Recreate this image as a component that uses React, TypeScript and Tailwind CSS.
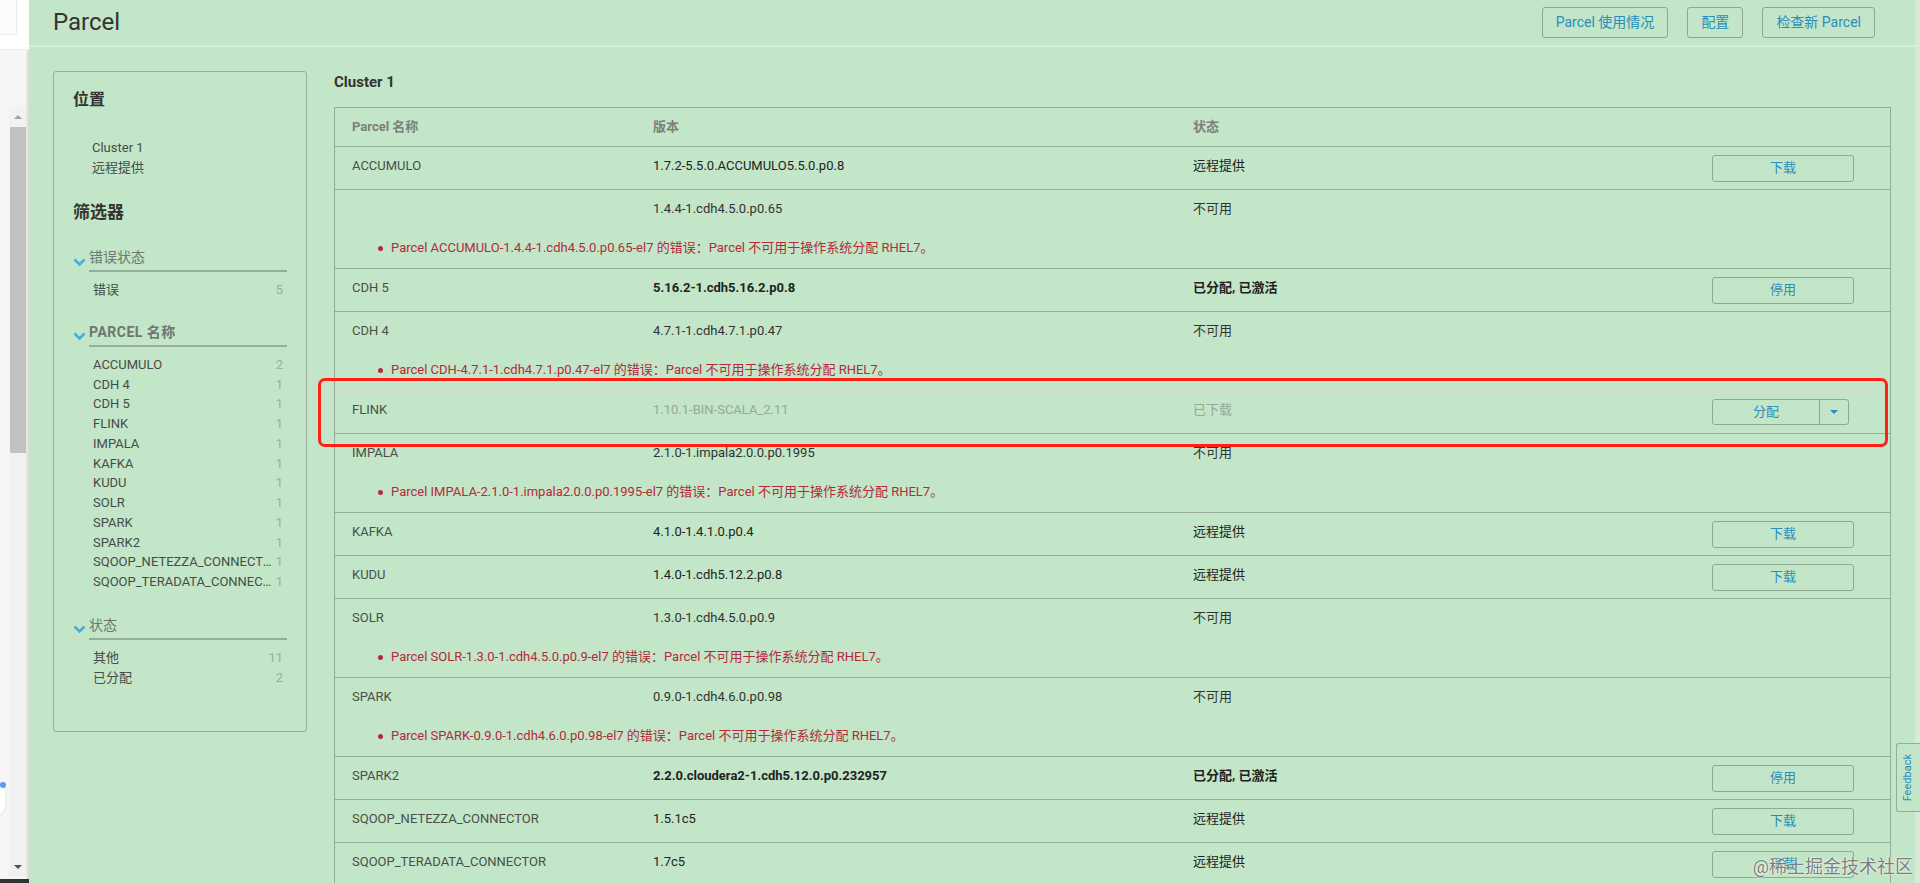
import clsx from 'clsx'

interface Parcel {
  name: string
  version: string
  status: string
  action?: string
  error?: string
  weight?: 'dark' | 'bold'
  muted?: boolean
  split?: boolean
  lightBottom?: boolean
  marked?: boolean
}

const parcels: Parcel[] = [
  { name: 'ACCUMULO', version: '1.7.2-5.5.0.ACCUMULO5.5.0.p0.8', status: '远程提供', action: '下载', weight: 'dark' },
  {
    name: '',
    version: '1.4.4-1.cdh4.5.0.p0.65',
    status: '不可用',
    error: 'Parcel ACCUMULO-1.4.4-1.cdh4.5.0.p0.65-el7 的错误：Parcel 不可用于操作系统分配 RHEL7。',
  },
  { name: 'CDH 5', version: '5.16.2-1.cdh5.16.2.p0.8', status: '已分配, 已激活', action: '停用', weight: 'bold' },
  {
    name: 'CDH 4',
    version: '4.7.1-1.cdh4.7.1.p0.47',
    status: '不可用',
    error: 'Parcel CDH-4.7.1-1.cdh4.7.1.p0.47-el7 的错误：Parcel 不可用于操作系统分配 RHEL7。',
    lightBottom: true,
  },
  { name: 'FLINK', version: '1.10.1-BIN-SCALA_2.11', status: '已下载', action: '分配', muted: true, split: true, marked: true },
  {
    name: 'IMPALA',
    version: '2.1.0-1.impala2.0.0.p0.1995',
    status: '不可用',
    error: 'Parcel IMPALA-2.1.0-1.impala2.0.0.p0.1995-el7 的错误：Parcel 不可用于操作系统分配 RHEL7。',
  },
  { name: 'KAFKA', version: '4.1.0-1.4.1.0.p0.4', status: '远程提供', action: '下载', weight: 'dark' },
  { name: 'KUDU', version: '1.4.0-1.cdh5.12.2.p0.8', status: '远程提供', action: '下载', weight: 'dark' },
  {
    name: 'SOLR',
    version: '1.3.0-1.cdh4.5.0.p0.9',
    status: '不可用',
    error: 'Parcel SOLR-1.3.0-1.cdh4.5.0.p0.9-el7 的错误：Parcel 不可用于操作系统分配 RHEL7。',
  },
  {
    name: 'SPARK',
    version: '0.9.0-1.cdh4.6.0.p0.98',
    status: '不可用',
    error: 'Parcel SPARK-0.9.0-1.cdh4.6.0.p0.98-el7 的错误：Parcel 不可用于操作系统分配 RHEL7。',
  },
  { name: 'SPARK2', version: '2.2.0.cloudera2-1.cdh5.12.0.p0.232957', status: '已分配, 已激活', action: '停用', weight: 'bold' },
  { name: 'SQOOP_NETEZZA_CONNECTOR', version: '1.5.1c5', status: '远程提供', action: '下载', weight: 'dark' },
  { name: 'SQOOP_TERADATA_CONNECTOR', version: '1.7c5', status: '远程提供', action: '下载', weight: 'dark' },
]

const parcelCounts: [string, number][] = [
  ['ACCUMULO', 2],
  ['CDH 4', 1],
  ['CDH 5', 1],
  ['FLINK', 1],
  ['IMPALA', 1],
  ['KAFKA', 1],
  ['KUDU', 1],
  ['SOLR', 1],
  ['SPARK', 1],
  ['SPARK2', 1],
  ['SQOOP_NETEZZA_CONNECTOR', 1],
  ['SQOOP_TERADATA_CONNECTOR', 1],
]

function Chevron() {
  return (
    <svg width="13" height="9" viewBox="0 0 13 9" className="shrink-0">
      <polyline points="1.5,1.5 6.5,6.5 11.5,1.5" fill="none" stroke="#45aedb" strokeWidth="2.6" />
    </svg>
  )
}

function FilterGroup({ title, items, upper }: { title: string; items: [string, number][]; upper?: boolean }) {
  return (
    <div>
      <div className="flex items-end pl-[19px]">
        <div className="w-[16px] h-[20px] flex items-center">
          <Chevron />
        </div>
        <div
          className={clsx(
            'flex-1 mr-[19px] h-[25px] border-b-2 border-[#97ae9a] text-[14px] leading-[20px] text-[#6f7670]',
            upper && 'font-bold tracking-[0.5px]',
          )}
        >
          {title}
        </div>
      </div>
      <div className="mt-[8px] ml-[39px] mr-[23px]">
        {items.map(([label, count]) => (
          <div key={label} className="flex items-center h-[19.75px] text-[13px] text-[#474c48]">
            <span className="flex-1 truncate">{label}</span>
            <span className="text-[#a3a9a4] pl-[2px]">{count}</span>
          </div>
        ))}
      </div>
    </div>
  )
}

function Sidebar() {
  return (
    <div className="w-[254px] h-[661px] shrink-0 border border-[#97ae9a] rounded-[3px]">
      <div className="pl-[19px] pt-[16px] text-[16px] leading-[24px] font-bold text-[#333]">位置</div>
      <div className="pl-[38px] mt-[26px] text-[13px] leading-[20px] text-[#474c48]">
        <div>Cluster 1</div>
        <div>远程提供</div>
      </div>
      <div className="pl-[19px] mt-[22px] text-[17px] leading-[24px] font-bold text-[#333]">筛选器</div>
      <div className="mt-[23px]">
        <FilterGroup title="错误状态" items={[['错误', 5]]} />
      </div>
      <div className="mt-[22px]">
        <FilterGroup title="PARCEL 名称" items={parcelCounts} upper />
      </div>
      <div className="mt-[23px]">
        <FilterGroup
          title="状态"
          items={[
            ['其他', 11],
            ['已分配', 2],
          ]}
        />
      </div>
    </div>
  )
}

function ActionButton({ label, split }: { label: string; split?: boolean }) {
  if (split) {
    return (
      <div className="flex h-[26px] mr-[5px] border border-[#8fa893] rounded-[3px] text-[13px] text-[#2b8cbd]">
        <div className="w-[107px] flex items-center justify-center border-r border-[#8fa893]">{label}</div>
        <div className="w-[28px] flex items-center justify-center">
          <div className="w-0 h-0 border-x-[4px] border-x-transparent border-t-[4px] border-t-[#2b8cbd]" />
        </div>
      </div>
    )
  }
  return (
    <div className="w-[142px] h-[27px] flex items-center justify-center border border-[#8fa893] rounded-[3px] text-[13px] text-[#2b8cbd]">
      {label}
    </div>
  )
}

function ParcelRow({ row }: { row: Parcel }) {
  const tone = clsx(
    row.muted ? 'text-[#9aa59b]' : row.weight ? 'text-[#222]' : 'text-[#333]',
    row.weight === 'bold' && 'font-bold',
  )
  return (
    <div className={clsx('relative border-b', row.lightBottom ? 'border-[#d2ded3]' : 'border-[#93ad97]')}>
      <div className="grid grid-cols-[301px_540px_1fr] h-[42px] items-center text-[13px] pb-[4px]">
        <div className="pl-[17px] text-[#4a4f4b]">{row.name}</div>
        <div className={clsx('pl-[17px]', tone)}>{row.version}</div>
        <div className="flex items-center justify-between pl-[17px] pr-[36px]">
          <span className={tone}>{row.status}</span>
          {row.action && (
            <div className="pt-[4px]">
              <ActionButton label={row.action} split={row.split} />
            </div>
          )}
        </div>
      </div>
      {row.error && (
        <div className="flex items-center h-[18px] mt-[7px] mb-[11px] pl-[43px] text-[13px] text-[#b32a3b]">
          <span className="w-[5px] h-[5px] rounded-full bg-[#b32a3b] mr-[8px]" />
          {row.error}
        </div>
      )}
      {row.marked && (
        <div className="absolute left-[-17px] top-[-13px] w-[1570px] h-[69px] border-[3px] border-[#ff2118] rounded-[7px] pointer-events-none" />
      )}
    </div>
  )
}

function ParcelTable() {
  return (
    <div className="flex-1 min-w-0">
      <div className="h-[22px] flex items-center text-[15px] font-bold text-[#333]">Cluster 1</div>
      <div className="mt-[14px] border border-[#93ad97] border-b-0">
        <div className="grid grid-cols-[301px_540px_1fr] h-[39px] items-center border-b border-[#93ad97] text-[13px] font-bold text-[#7a807b]">
          <div className="pl-[17px]">Parcel 名称</div>
          <div className="pl-[17px]">版本</div>
          <div className="pl-[17px]">状态</div>
        </div>
        {parcels.map((row, i) => (
          <ParcelRow key={i} row={row} />
        ))}
      </div>
    </div>
  )
}

function HeaderButton({ label }: { label: string }) {
  return (
    <div className="h-[31px] px-[13px] flex items-center border border-[#8fa893] rounded-[3px] text-[14px] text-[#2b8cbd]">
      {label}
    </div>
  )
}

function BrowserStrip() {
  return (
    <div className="relative w-[29px] shrink-0 bg-[#f6f6f6]">
      <div className="h-[50px] bg-white border-b border-[#ececec]">
        <div className="w-[17px] h-[35px] bg-[#fcfcfc] border-r border-b border-[#ebebeb] rounded-br-[3px]" />
      </div>
      <div className="absolute left-[9px] top-[107px] bottom-[6px] w-[18px] bg-[#f1f1f1]">
        <div className="flex justify-center pt-[8px]">
          <div className="w-0 h-0 border-x-[4px] border-x-transparent border-b-[4px] border-b-[#a3a3a3]" />
        </div>
        <div className="absolute left-[1px] right-0 top-[20px] h-[326px] bg-[#c1c1c1]" />
        <div className="absolute bottom-[8px] left-0 right-0 flex justify-center">
          <div className="w-0 h-0 border-x-[4px] border-x-transparent border-t-[4px] border-t-[#505050]" />
        </div>
      </div>
      <div className="absolute right-0 top-[50px] bottom-0 w-[3px] bg-gradient-to-r from-[#ececec] to-[#d9d9d9]" />
      <div className="absolute left-[-19px] top-[780px] w-[24px] h-[37px] rounded-full bg-white shadow-[0_0_2px_rgba(0,0,0,0.15)]" />
      <div className="absolute left-[0px] top-[782px] w-[6px] h-[6px] rounded-full bg-[#5c9cf0]" />
      <div className="absolute left-0 right-0 bottom-0 h-[4px] bg-[#333]" />
    </div>
  )
}

export default function App() {
  return (
    <div className="relative flex w-[1920px] h-[883px] overflow-hidden bg-[#c2e6c7] font-['Roboto','Noto_Sans_CJK_SC',sans-serif]">
      <BrowserStrip />
      <div className="flex-1 min-w-0 flex flex-col">
        <div className="h-[47px] shrink-0 flex items-center justify-between pl-[24px] pr-[40px] border-b-2 border-[#d7ecda]">
          <div className="text-[24px] text-[#333] pb-[1px]">Parcel</div>
          <div className="flex items-center gap-[19px]">
            <HeaderButton label="Parcel 使用情况" />
            <HeaderButton label="配置" />
            <HeaderButton label="检查新 Parcel" />
          </div>
        </div>
        <div className="flex gap-[27px] pt-[24px] px-[24px]">
          <Sidebar />
          <ParcelTable />
        </div>
      </div>
      <div className="w-[5px] shrink-0 bg-[#d9ead9]" />
      <div className="absolute right-0 top-[743px] w-[24px] h-[69px] flex items-center justify-center bg-[#c2e6c7] border border-r-0 border-[#93ad97] rounded-l-[3px]">
        <span className="[writing-mode:vertical-rl] rotate-180 text-[11px] text-[#2b8cbd]">Feedback</span>
      </div>
      <div className="absolute right-[7px] bottom-[4px] text-[18px] leading-[24px] text-[#7a7f7b] [text-shadow:0_0_2px_#fff,0_0_1px_#fff]">
        @稀土掘金技术社区
      </div>
    </div>
  )
}
